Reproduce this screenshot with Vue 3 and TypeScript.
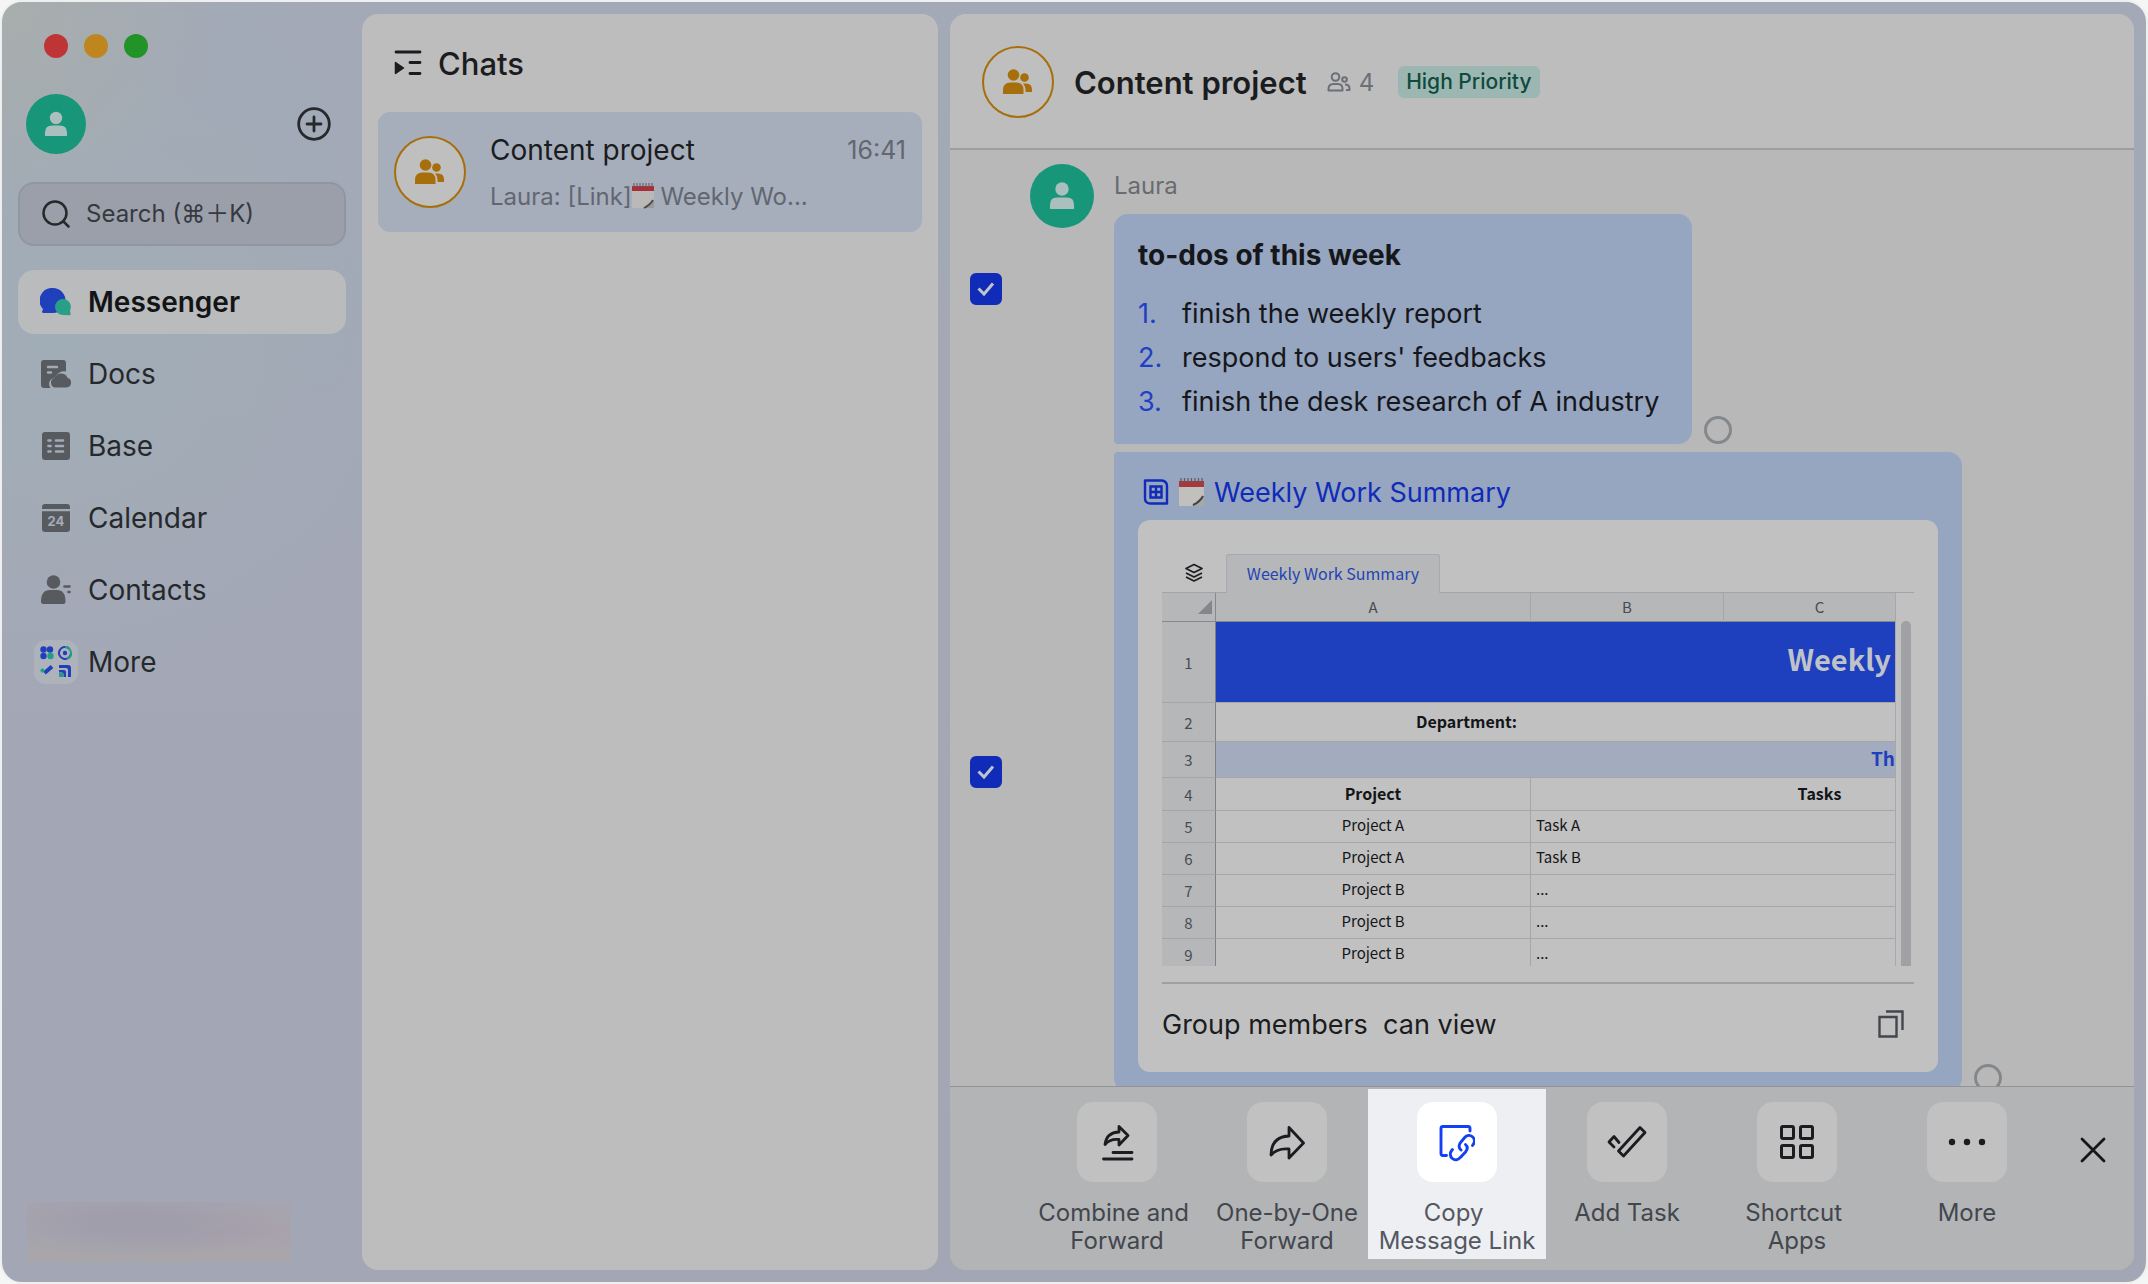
<script setup lang="ts">
import { ref } from 'vue'

interface SheetRow {
  n: number
  project: string
  task: string
}

const todos: string[] = [
  'finish the weekly report',
  "respond to users' feedbacks",
  'finish the desk research of A industry',
]

const sheetRows: SheetRow[] = [
  { n: 5, project: 'Project A', task: 'Task A' },
  { n: 6, project: 'Project A', task: 'Task B' },
  { n: 7, project: 'Project B', task: '...' },
  { n: 8, project: 'Project B', task: '...' },
  { n: 9, project: 'Project B', task: '...' },
]

const labels = {
  combine: 'Combine and \nForward',
  single: 'One-by-One\nForward',
  copyLink: 'Copy \nMessage Link',
  task: 'Add Task',
  apps: 'Shortcut \nApps',
  more: 'More',
}

const access = 'Group members  can view'
const search = ref('')
const todoSelected = ref(true)
const sheetSelected = ref(true)
</script>

<template>
  <div class="window">
    <aside class="sidebar">
      <div class="lights"><i class="red"></i><i class="amber"></i><i class="green"></i></div>
      <div class="profile">
        <span class="avatar user small">
          <svg width="24" height="26" viewBox="0 0 24 26"><circle cx="12" cy="7" r="6.2" /><path d="M1 25v-3.500q0-7 7-7h8q7 0 7 7V25z" /></svg>
        </span>
        <button class="plain" aria-label="New">
          <svg width="34" height="34" viewBox="0 0 34 34" fill="none" stroke="#26292c" stroke-width="2.800" stroke-linecap="round"><circle cx="17" cy="17" r="15.300" /><path d="M17 10v14M10 17h14" /></svg>
        </button>
      </div>
      <label class="search">
        <svg width="28" height="28" viewBox="0 0 28 28" fill="none" stroke="#26292c" stroke-width="2.500" stroke-linecap="round"><circle cx="13" cy="13" r="11.500" /><path d="M21.500 21.500 26.500 26.500" /></svg>
        <input v-model="search" type="text" aria-label="Search" placeholder="Search (⌘＋K)" />
      </label>
      <nav>
        <a href="#" class="active">
          <span class="ico"><svg width="32" height="28" viewBox="0 0 32 28"><path d="M13 0a12.500 12.500 0 0 1 12.500 12.500c0 7-5.500 12.500-12.500 12.500H3.500q-2 0-1.200-2l.7-2A12.500 12.500 0 0 1 13 0z" fill="#1f40ba" /><path d="M23 11a8 8 0 0 1 7 11.500l.6 3.500q.2 1.300-1.300 1.200L23 27a8 8 0 0 1 0-16z" fill="#289f86" /></svg></span>Messenger
        </a>
        <a href="#">
          <span class="ico"><svg width="30" height="28" viewBox="0 0 30 28"><path d="M3 0h19q3 0 3 3v8.500a10 10 0 0 0-11 6Q8.500 19 8 23.500q0 2.500 1.500 4.500H3q-3 0-3-3V3q0-3 3-3z" fill="#575b60" /><path d="M7 7h9M7 12.500h3" stroke="#a4abb6" stroke-width="2.400" stroke-linecap="round" /><path d="M14.500 27.500a5 5 0 0 1-.8-9.800 7 7 0 0 1 12.800 0 5 5 0 0 1-1 9.800z" fill="#575b60" /></svg></span>Docs
        </a>
        <a href="#">
          <span class="ico"><svg width="28" height="28" viewBox="0 0 28 28"><rect width="28" height="28" rx="3" fill="#575b60" /><path d="M6.500 8.500h2M14 8.500h7M6.500 14h2M14 14h7M6.500 19.500h2M14 19.500h7" stroke="#a4abb6" stroke-width="2.600" stroke-linecap="round" /></svg></span>Base
        </a>
        <a href="#">
          <span class="ico"><svg width="28" height="28" viewBox="0 0 28 28"><path d="M0 5V3q0-3 3-3h22q3 0 3 3v2zM0 7.300h28V25q0 3-3 3H3q-3 0-3-3z" fill="#575b60" /><text x="14" y="22" text-anchor="middle" font-family="Inter, sans-serif" font-weight="700" font-size="13" fill="#a6acb8">24</text></svg></span>Calendar
        </a>
        <a href="#">
          <span class="ico"><svg width="30" height="30" viewBox="0 0 30 30"><circle cx="12.500" cy="7" r="6.800" fill="#575b60" /><path d="M0 26.500q0-11.500 9-11.500h7q8.500 0 8.500 11.500 0 2.500-2.500 2.500H2.500Q0 29 0 26.500z" fill="#575b60" /><path d="M23.500 11.500h5M27.500 17h1" stroke="#575b60" stroke-width="2.600" stroke-linecap="round" /></svg></span>Contacts
        </a>
        <a href="#">
          <span class="ico tile"><svg width="32" height="32" viewBox="0 0 32 32"><g fill="#1f40ba"><circle cx="3.500" cy="3.500" r="3.200" /><circle cx="10" cy="3.500" r="3.200" /><circle cx="3.500" cy="10" r="3.200" /></g><circle cx="10.500" cy="10" r="3.200" fill="#1f9f86" /><g fill="none" stroke-width="2"><path d="M29 2.500A6 6 0 1 0 31 7" stroke="#1f40ba" /><path d="M25 1a6 6 0 0 1 6 6q0 5-4 5.500" stroke="#1f9f86" /><path d="M4.500 27 12 20.500" stroke="#1f40ba" stroke-width="4" /></g><circle cx="25" cy="7" r="2.200" fill="#1f40ba" /><path d="m2.500 22 2.500 2.500L2.500 27 0 24.500z" fill="#1f9f86" /><path d="M19 19h9q3 0 3 3v9h-3v-7q0-2-2-2h-7zM19 24h5q2 0 2 2v5h-2.500v-3q0-1.500-1.500-1.500h-3z" fill="#1f40ba" /><path d="M19 27h4v4h-4z" fill="#1f9f86" /></svg></span>More
        </a>
      </nav>
      <div class="masked"></div>
    </aside>

    <section class="chats">
      <header>
        <svg width="28" height="26" viewBox="0 0 28 26" fill="none" stroke="#1a1c20" stroke-width="2.800" stroke-linecap="round"><path d="M2 2h24M16 12.500h10M16 23.500h10" /><path d="M1.500 12.500v11l8-5.500z" fill="#1a1c20" stroke-width="1.500" stroke-linejoin="round" /></svg>
        <h2>Chats</h2>
      </header>
      <a href="#" class="chat">
        <span class="avatar group">
          <svg width="30" height="26" viewBox="0 0 30 26"><circle cx="10.500" cy="6" r="5.800" /><circle cx="21.500" cy="8.500" r="4.300" /><path d="M0 25v-4q0-7.500 7.500-7.500h6q7 0 7 7.500v4zM20 14.500h3q6 0 6 6V23h-6.500v-2.500q0-3.500-2.500-6z" /></svg>
        </span>
        <span class="chat-text">
          <span class="line"><span class="name">Content project</span><time>16:41</time></span>
          <span class="preview">Laura: [Link]<svg width="22" height="26" viewBox="0 0 22 26"><path d="M0 3h22v22H0z" fill="#bbb9b7" /><path d="M0 3h22v5H0z" fill="#a62f38" /><path d="M2 0v4M5 0v4M8 0v4M11 0v4M14 0v4M17 0v4M20 0v4" stroke="#6b6668" stroke-width="1.200" /><path d="M22 17q-3 1-6 4.500L11 25h11z" fill="#9a9a9a" /><path d="M21 17q-3 5-9 8" stroke="#4c4c4e" stroke-width="1.800" fill="none" /></svg> Weekly Wo...</span>
        </span>
      </a>
    </section>

    <main class="conversation">
      <header>
        <span class="avatar group">
          <svg width="30" height="26" viewBox="0 0 30 26"><circle cx="10.500" cy="6" r="5.800" /><circle cx="21.500" cy="8.500" r="4.300" /><path d="M0 25v-4q0-7.500 7.500-7.500h6q7 0 7 7.500v4zM20 14.500h3q6 0 6 6V23h-6.500v-2.500q0-3.500-2.500-6z" /></svg>
        </span>
        <h1>Content project</h1>
        <span class="members">
          <svg width="24" height="20" viewBox="0 0 24 20" fill="none" stroke="#6b6f76" stroke-width="2"><circle cx="8.500" cy="5" r="3.800" /><circle cx="17.500" cy="7.500" r="2.300" /><path d="M1.500 18.500V17q0-5 5-5H11q4.500 0 4.500 5v1.500zM18 12.500q4.500 0 4.500 4v1.500H19" stroke-linejoin="round" /></svg>4
        </span>
        <span class="tag">High Priority</span>
      </header>

      <div class="messages">
        <article class="message first">
          <label class="check"><input v-model="todoSelected" type="checkbox" aria-label="Select to-dos message" /><svg v-if="todoSelected" width="20" height="16" viewBox="0 0 20 16"><path d="m2.500 7.500 5.500 5.500 9-10.500" /></svg></label>
          <span class="avatar user">
            <svg width="24" height="28" viewBox="0 0 24 28"><circle cx="12" cy="7" r="6.700" /><path d="M0 27v-4.500q0-7 7-7h10q7 0 7 7V27z" /></svg>
          </span>
          <div class="content">
            <span class="sender">Laura</span>
            <div class="with-status">
              <div class="bubble todo">
                <h3>to-dos of this week</h3>
                <ol>
                  <li v-for="(item, i) in todos" :key="item"><span class="num">{{ i + 1 }}.</span>{{ item }}</li>
                </ol>
              </div>
              <span class="ring"></span>
            </div>
          </div>
        </article>

        <article class="message second">
          <label class="check"><input v-model="sheetSelected" type="checkbox" aria-label="Select Weekly Work Summary message" /><svg v-if="sheetSelected" width="20" height="16" viewBox="0 0 20 16"><path d="m2.500 7.500 5.500 5.500 9-10.500" /></svg></label>
          <div class="content with-status offset">
            <div class="bubble doc">
              <a href="#" class="doc-title">
                <svg width="26" height="26" viewBox="0 0 26 26" fill="none" stroke="#0f2bb8" stroke-width="2.400"><path d="M2 1.500h17q5 1 5 5.500v17.500H7q-5-.5-5-5z" stroke-linejoin="round" /><path d="M7.500 7.500h11v11h-11zM13 7.500v11M7.500 13h11" /></svg>
                <svg width="25" height="28" viewBox="0 0 25 28"><path d="M0 3h25v25H0z" fill="#c2c0bd" /><path d="M0 3h25v6H0z" fill="#a23a40" /><path d="M2 0v4M5.500 0v4M9 0v4M12.500 0v4M16 0v4M19.500 0v4M23 0v4" stroke="#5c5a5c" stroke-width="1.200" /><path d="M25 18q-3 1-7 5l-5 5h12z" fill="#a8a8a8" /><path d="M24 18q-3 6-10 9" stroke="#444" stroke-width="2" fill="none" /></svg>
                <span>Weekly Work Summary</span>
              </a>
              <div class="card">
                <div class="sheet">
                  <div class="tabs">
                    <svg width="20" height="20" viewBox="0 0 20 20" fill="none" stroke="#1b1d20" stroke-width="1.700" stroke-linejoin="round"><path d="m10 1.500 8 4-8 4-8-4zM2 10l8 4 8-4M2 14l8 4 8-4" /></svg>
                    <span class="tab">Weekly Work Summary</span>
                  </div>
                  <div class="grid">
                    <table>
                      <colgroup><col class="c0" /><col class="ca" /><col class="cb" /><col /></colgroup>
                      <thead>
                        <tr><th class="corner"><svg width="14" height="14" viewBox="0 0 14 14"><path d="M14 0v14H0z" fill="#85868b" /></svg></th><th>A</th><th>B</th><th class="wide">C</th></tr>
                      </thead>
                      <tbody>
                        <tr class="r1"><th>1</th><td colspan="3" class="banner">Weekly</td></tr>
                        <tr class="r2"><th>2</th><td colspan="3" class="dept">Department:</td></tr>
                        <tr class="r3"><th>3</th><td colspan="3" class="sub">Th</td></tr>
                        <tr class="r4"><th>4</th><td class="bold mid vline">Project</td><td></td><td class="bold mid wide">Tasks</td></tr>
                        <tr v-for="row in sheetRows" :key="row.n" class="row"><th>{{ row.n }}</th><td class="mid vline">{{ row.project }}</td><td>{{ row.task }}</td><td></td></tr>
                      </tbody>
                    </table>
                    <div class="scroll"><i></i></div>
                  </div>
                </div>
                <div class="access">
                  <span class="who">{{ access }}</span>
                  <button class="plain" aria-label="Copy">
                    <svg width="26" height="28" viewBox="0 0 26 28" fill="none" stroke="#43464c" stroke-width="2.400"><path d="M1.500 7h17v19.500h-17zM8 1.500h16.500V20" /></svg>
                  </button>
                </div>
              </div>
            </div>
            <span class="ring"></span>
          </div>
        </article>
      </div>

      <footer class="toolbar">
        <button class="tool first-tool">
          <span class="key"><svg width="36" height="38" viewBox="0 0 36 38" fill="none" stroke="#1a1c20" stroke-width="2.800"><path d="M20 3.500 29 12.500 20 22v-5.500q-9-1-14 5Q7.500 9.500 20 9z" stroke-linejoin="round" /><path d="M14 29.500h19M4.500 36h28.500" stroke-linecap="round" /></svg></span>
          <span class="label">{{ labels.combine }}</span>
        </button>
        <button class="tool">
          <span class="key"><svg width="38" height="36" viewBox="0 0 38 36" fill="none" stroke="#1a1c20" stroke-width="2.800" stroke-linejoin="round"><path d="M21 3.500 35.500 19 21 34v-9q-12-1-18 6Q3.500 12.500 21 12z" /></svg></span>
          <span class="label">{{ labels.single }}</span>
        </button>
        <button class="tool current">
          <span class="key"><svg width="36" height="40" viewBox="0 0 36 40" fill="none" stroke="#1340f2" stroke-width="2.900" stroke-linecap="round"><path d="M31 9V6.500q0-2-2-2H4q-2 0-2 2v25q0 2 2 2h3.500" stroke-linejoin="round" /><path d="M33.500 23.500l.7-1a5.500 5.500 0 0 0-8.500-7L21.500 20.500q-3 4.500.5 7.500" /><path d="M13.500 27.500l-1 1.200a5.500 5.500 0 0 0 8.600 7L26.500 30q3.500-4.500 0-7.500" /></svg></span>
          <span class="label">{{ labels.copyLink }}</span>
        </button>
        <button class="tool">
          <span class="key"><svg width="40" height="34" viewBox="0 0 40 34" fill="none" stroke="#1a1c20" stroke-width="2.800" stroke-linejoin="round" stroke-linecap="round"><path d="m33 2.500 5 5L16.500 31l-5-5z" /><path d="m12 17.500-5-6-5 5.500 5 5" /></svg></span>
          <span class="label">{{ labels.task }}</span>
        </button>
        <button class="tool">
          <span class="key"><svg width="36" height="36" viewBox="0 0 36 36" fill="none" stroke="#1a1c20" stroke-width="3"><rect x="2.500" y="2.500" width="12" height="12" rx="1.500" /><rect x="21.500" y="2.500" width="12" height="12" rx="1.500" /><rect x="2.500" y="21.500" width="12" height="12" rx="1.500" /><rect x="21.500" y="21.500" width="12" height="12" rx="1.500" /></svg></span>
          <span class="label">{{ labels.apps }}</span>
        </button>
        <button class="tool">
          <span class="key"><svg width="38" height="8" viewBox="0 0 38 8" fill="#1a1c20"><circle cx="4" cy="4" r="3.200" /><circle cx="19" cy="4" r="3.200" /><circle cx="34" cy="4" r="3.200" /></svg></span>
          <span class="label">{{ labels.more }}</span>
        </button>
        <button class="plain close" aria-label="Close">
          <svg width="26" height="26" viewBox="0 0 26 26" stroke="#141618" stroke-width="2.800" stroke-linecap="round"><path d="M2 2l22 22M24 2 2 24" /></svg>
        </button>
      </footer>
    </main>
  </div>
</template>

<style>
body {
  background: #f4f5f5;
}
</style>

<style scoped>
* {
  box-sizing: border-box;
}
.window {
  display: grid;
  grid-template-columns: 360px 576px minmax(0, 1fr);
  grid-template-rows: minmax(0, 1fr);
  height: 100vh;
  border: 2px solid #eef0f0;
  border-radius: 22px;
  padding-right: 12px;
  background:
    radial-gradient(circle at 0 0, #a8aeac 0, transparent 220px),
    radial-gradient(circle at 60px 330px, #a1adb6 0, transparent 420px),
    linear-gradient(180deg, #a3a9b7, #a4a7b6 45%, #a3a6b5);
  font-family: Inter, 'Liberation Sans', 'Noto Sans CJK SC', sans-serif;
  color: #1a1c20;
  overflow: hidden;
}
a {
  color: inherit;
  text-decoration: none;
}
h1,
h2,
h3,
ol {
  margin: 0;
  padding: 0;
}
svg {
  display: block;
  flex: none;
}
.plain {
  border: 0;
  padding: 0;
  background: none;
}

.sidebar {
  display: flex;
  flex-direction: column;
  padding: 32px 16px 20px;
}
.lights {
  display: flex;
  gap: 16px;
  padding-left: 26px;
}
.lights i {
  width: 24px;
  height: 24px;
  border-radius: 50%;
}
.red {
  background: #bf3535;
}
.amber {
  background: #bf861f;
}
.green {
  background: #229427;
}
.profile {
  display: flex;
  align-items: center;
  justify-content: space-between;
  margin-top: 36px;
  padding: 0 15px 0 8px;
}
.avatar {
  display: flex;
  flex: none;
  align-items: center;
  justify-content: center;
  border-radius: 50%;
}
.avatar.user {
  width: 64px;
  height: 64px;
  background: #18967a;
  fill: #abc0be;
}
.avatar.user.small {
  width: 60px;
  height: 60px;
}
.avatar.group {
  width: 72px;
  height: 72px;
  border: 2px solid #a66f0c;
  background: #bfbfbf;
  fill: #a66f0c;
}
.search {
  display: flex;
  align-items: center;
  gap: 16px;
  height: 64px;
  margin-top: 28px;
  padding: 0 22px;
  border: 2px solid #9196a0;
  border-radius: 16px;
  background: #9b9fa9;
}
.search input {
  width: 100%;
  min-width: 0;
  border: 0;
  padding: 0;
  outline: 0;
  background: none;
  font: 24px/32px Inter, 'Noto Sans CJK SC', sans-serif;
  color: #36393f;
}
.search input::placeholder {
  color: #36393f;
  opacity: 1;
}
nav {
  display: flex;
  flex-direction: column;
  gap: 8px;
  margin-top: 24px;
}
nav a {
  display: flex;
  align-items: center;
  gap: 10px;
  height: 64px;
  padding-left: 16px;
  border-radius: 16px;
  font-size: 28px;
  color: #26292c;
}
nav a.active {
  background: #babbbd;
  font-weight: 600;
  color: #131416;
}
.ico {
  display: flex;
  align-items: center;
  justify-content: center;
  width: 44px;
  height: 44px;
  border-radius: 12px;
}
.tile {
  background: #aeb2bb;
}
.masked {
  width: 264px;
  height: 60px;
  margin: auto 0 0 9px;
  background:
    radial-gradient(ellipse at 40% 35%, #a09eab 15%, transparent 65%),
    radial-gradient(ellipse at 72% 50%, #a89fab 0, transparent 50%),
    linear-gradient(180deg, #a5a4af, #a9a6aa);
}

.chats {
  margin: 12px 0;
  border-radius: 16px;
  background: #bdbdbd;
}
.chats header {
  display: flex;
  align-items: center;
  gap: 16px;
  height: 98px;
  padding-left: 32px;
}
h2 {
  font-size: 31px;
  font-weight: 500;
}
.chat {
  display: flex;
  align-items: center;
  gap: 24px;
  height: 120px;
  margin: 0 16px;
  padding: 4px 16px 0;
  border-radius: 12px;
  background: #a6aebc;
}
.chat .avatar {
  margin-bottom: 4px;
}
.chat-text {
  flex: 1;
  min-width: 0;
}
.line {
  display: flex;
  justify-content: space-between;
  align-items: center;
  height: 44px;
  color: #1a1c20;
}
.name {
  font-size: 28px;
}
time {
  font-size: 25px;
  color: #62676f;
}
.preview {
  display: flex;
  align-items: center;
  height: 48px;
  font-size: 24px;
  white-space: pre;
  color: #62676f;
}

.conversation {
  display: flex;
  flex-direction: column;
  min-width: 0;
  margin: 12px 0 12px 12px;
  border-radius: 16px;
  background: #b8b8b8;
  overflow: hidden;
}
.conversation > header {
  display: flex;
  align-items: center;
  height: 136px;
  padding: 2px 32px 0;
  border-bottom: 2px solid #9e9e9e;
  background: #bdbdbd;
  flex: none;
}
h1 {
  margin-left: 20px;
  font-size: 31px;
  font-weight: 600;
  white-space: nowrap;
}
.members {
  display: flex;
  align-items: center;
  gap: 8px;
  margin-left: 20px;
  font-size: 24px;
  color: #6b6f76;
}
.tag {
  height: 32px;
  margin-left: 24px;
  padding: 0 8px;
  border-radius: 6px;
  background: #9cb7b2;
  font-size: 21px;
  font-weight: 500;
  line-height: 32px;
  color: #0f4a3d;
}

.messages {
  flex: 1;
  min-height: 0;
  overflow: hidden;
}
.message {
  display: flex;
  align-items: center;
  padding-left: 20px;
}
.first {
  margin-top: -16px;
}
.first .avatar {
  align-self: flex-start;
  margin: 30px 20px 0 28px;
}
.second {
  margin-top: 8px;
}
.offset {
  margin-left: 112px;
}
.first .content {
  padding-top: 36px;
}
.check {
  display: grid;
  flex: none;
  place-items: center;
  width: 32px;
  height: 32px;
}
.check > * {
  grid-area: 1 / 1;
}
.check input {
  appearance: none;
  width: 32px;
  height: 32px;
  margin: 0;
  border: 2px solid #0f2bb8;
  border-radius: 6px;
}
.check input:checked {
  background: #0f2bb8;
}
.check svg {
  fill: none;
  stroke: #c2c4cc;
  stroke-width: 3;
  pointer-events: none;
}
.sender {
  display: block;
  height: 44px;
  font-size: 24px;
  line-height: 32px;
  color: #686b71;
}
.with-status {
  display: flex;
  align-items: flex-end;
  gap: 12px;
}
.ring {
  flex: none;
  width: 28px;
  height: 28px;
  border: 3px solid #84888c;
  border-radius: 50%;
}
.bubble {
  border-radius: 4px 14px 14px 4px;
  background: #96a5c0;
}
.todo {
  width: 578px;
  padding: 20px 24px 20px;
  border-top-left-radius: 14px;
}
h3 {
  height: 58px;
  font-size: 28px;
  font-weight: 700;
  line-height: 42px;
  color: #15171a;
}
ol {
  list-style: none;
}
li {
  display: flex;
  font-size: 27px;
  line-height: 44px;
  white-space: nowrap;
  color: #15171a;
}
.num {
  width: 44px;
  color: #1f40c4;
}
.doc {
  width: 848px;
  padding: 0 24px 20px;
  border-bottom-left-radius: 14px;
}
.doc-title {
  display: flex;
  align-items: center;
  gap: 10px;
  height: 68px;
  padding: 12px 0 0 5px;
  font-size: 27px;
  color: #0f2bb8;
}
.card {
  height: 552px;
  padding: 34px 24px 0;
  border-radius: 12px;
  background: #c1c1c1;
}
.sheet {
  height: 430px;
  padding-bottom: 18px;
  border-bottom: 2px solid #a0a0a0;
  font-family: 'Noto Sans CJK SC', 'Noto Sans', sans-serif;
}
.tabs {
  display: flex;
  align-items: center;
  gap: 22px;
  height: 38px;
  padding-left: 22px;
}
.tab {
  position: relative;
  width: 214px;
  height: 39px;
  border: 1px solid #a6a9ad;
  border-bottom: 0;
  border-radius: 3px 3px 0 0;
  background: #b5b7b9;
  font-size: 16px;
  line-height: 36px;
  text-align: center;
  color: #1f44b4;
}
.grid {
  display: flex;
  height: 374px;
  border-top: 1px solid #a2a4a7;
  overflow: hidden;
}
table {
  flex: 1;
  table-layout: fixed;
  border-collapse: separate;
  border-spacing: 0;
  border-right: 1px solid #a8a8ab;
  font-size: 15px;
  line-height: 24px;
  color: #131518;
}
.c0 {
  width: 54px;
}
.ca {
  width: 315px;
}
.cb {
  width: 193px;
}
th,
td {
  padding: 0;
  border-bottom: 1px solid #a4a6a8;
  font-weight: 400;
  overflow: hidden;
  white-space: nowrap;
}
th {
  border-right: 1px solid #a4a6a9;
  background: #b5b7b9;
  color: #484b51;
}
thead th {
  height: 29px;
  border-bottom: 1px solid #85888d;
}
thead th:last-child {
  border-right: 0;
}
.corner {
  border-right-color: #85888d;
}
.corner svg {
  margin-left: 36px;
}
tbody th {
  padding-top: 1px;
  border-right-color: #7c8088;
}
td {
  padding: 0 0 4px 5px;
}
.mid {
  padding-left: 0;
  text-align: center;
}
.wide {
  padding-left: 20px;
}
.bold {
  padding-bottom: 2px;
  font-size: 16px;
  font-weight: 700;
}
.vline {
  border-right: 1px solid #a4a6a8;
}
.r1 {
  height: 81px;
}
.r2 {
  height: 39px;
}
.r3 {
  height: 36px;
}
.r4 {
  height: 33px;
}
.row {
  height: 32px;
}
.banner {
  padding: 0 4px 8px 0;
  background: #1f40be;
  font-size: 29px;
  line-height: 40px;
  font-weight: 700;
  text-align: right;
  color: #bfc3c9;
}
.dept {
  padding: 0 0 2px 200px;
  font-size: 16px;
  font-weight: 700;
}
.sub {
  padding: 0 0 4px;
  background: #a3abbe;
  font-size: 19px;
  font-weight: 700;
  text-align: right;
  color: #1f40be;
}
.scroll {
  width: 18px;
  padding: 28px 2px 0 5px;
}
.scroll i {
  display: block;
  width: 10px;
  height: 100%;
  border-radius: 5px 5px 0 0;
  background: #a0a1a4;
}
.access {
  display: flex;
  align-items: center;
  justify-content: space-between;
  height: 80px;
  padding-right: 10px;
  font-size: 27px;
}
.who {
  white-space: pre;
}

.toolbar {
  display: grid;
  grid-template-columns: 82px repeat(6, minmax(0, 1fr)) 82px;
  flex: none;
  height: 184px;
  border-top: 1px solid #929395;
  background: #b3b4b6;
}
.tool {
  display: flex;
  flex-direction: column;
  align-items: center;
  height: 170px;
  margin: 2px -4px 0;
  padding: 13px 0 0;
  border: 0;
  background: none;
  font: 24px Inter, 'Liberation Sans', sans-serif;
  color: #42464d;
}
.first-tool {
  grid-column: 2;
}
.key {
  display: flex;
  flex: none;
  align-items: center;
  justify-content: center;
  width: 80px;
  height: 80px;
  border-radius: 16px;
  background: #c1c1c1;
}
.label {
  margin-top: 17px;
  line-height: 28px;
  text-align: center;
  white-space: pre;
}
.current {
  background: #eeeff3;
  color: #535861;
}
.current .key {
  background: #fff;
}
.close {
  align-self: start;
  justify-self: center;
  margin-top: 50px;
}
</style>
